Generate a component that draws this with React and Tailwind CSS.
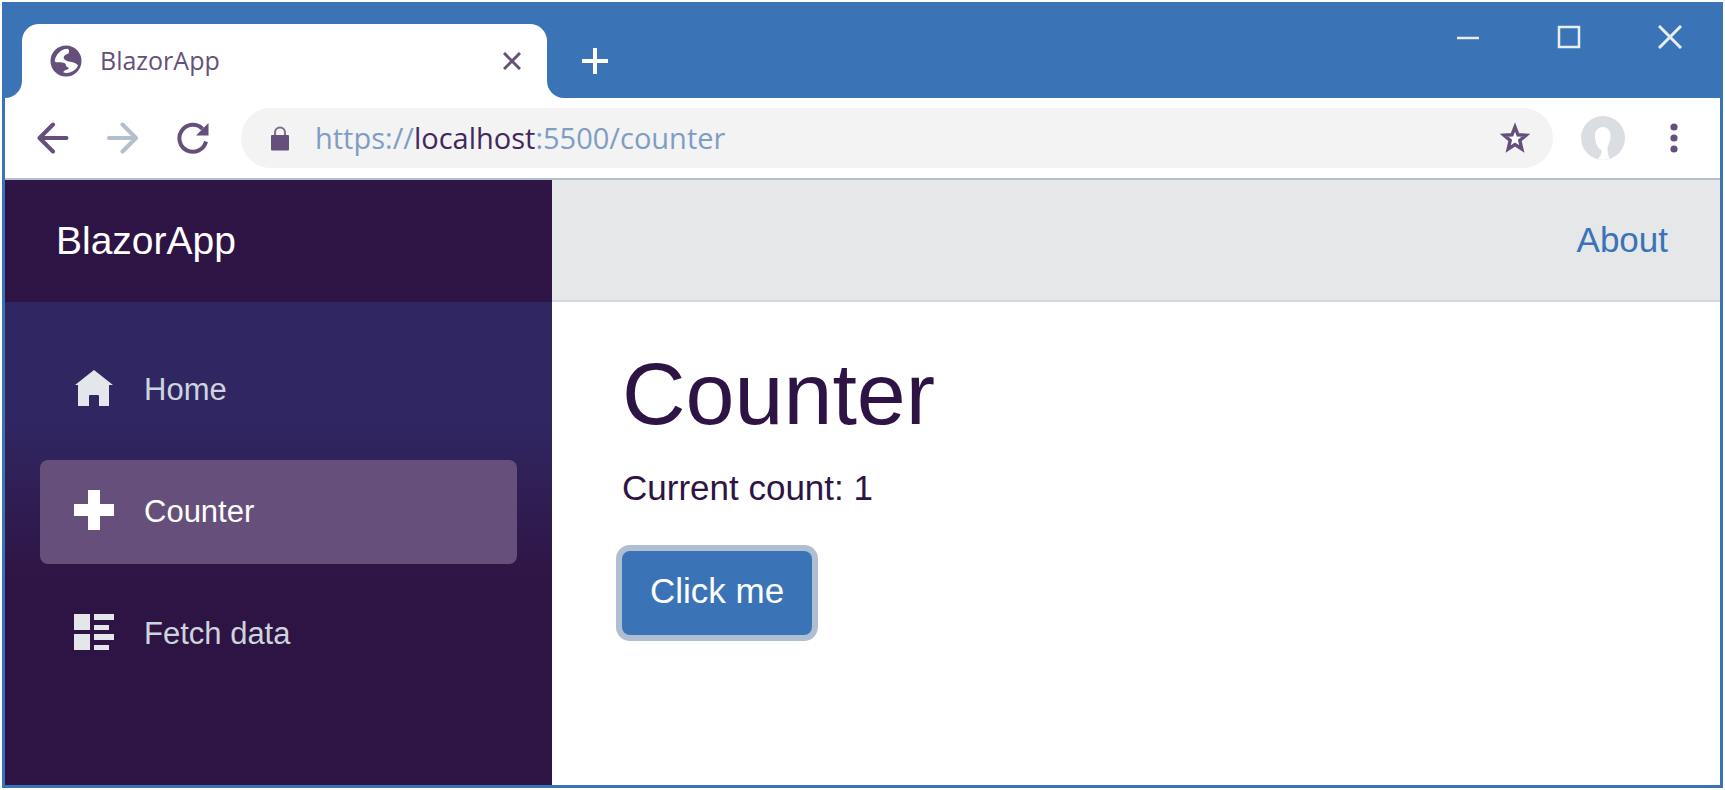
import { useState } from "react";

function GlobeIcon() {
  return (
    <svg viewBox="0 0 32 32" className="size-8 shrink-0" aria-hidden="true">
      <circle cx="16" cy="16" r="15.5" fill="#64507a" />
      <path
        d="M17.500 3.800C11 4 6.500 9 4.800 15C4.500 17.500 6 17.200 8 17.200C12 17.200 15.500 17.500 16 20C16.400 22.500 18 22 18.800 23C18.500 25 13 25 13.500 27.500C18.500 29 25.500 26.500 28 20.500C27 18.500 24 17.600 21.500 17C18.500 16.300 14.500 15.500 13.800 13.200C13.200 11.200 15.500 9.500 18 8.800C19.500 7.500 19.500 4.500 17.500 3.800Z"
        fill="#fff"
      />
    </svg>
  );
}

function BackIcon() {
  return (
    <svg viewBox="0 0 32 32" className="size-8" fill="none" stroke="currentColor" strokeWidth="4" strokeLinecap="round" strokeLinejoin="round" aria-hidden="true">
      <path d="M29.500 16H3M16 2.500L2.500 16L16 29.500" />
    </svg>
  );
}

function ForwardIcon() {
  return (
    <svg viewBox="0 0 32 32" className="size-8" fill="none" stroke="currentColor" strokeWidth="4" strokeLinecap="round" strokeLinejoin="round" aria-hidden="true">
      <path d="M2 16H28.500M15.500 2.500L29 16L15.500 29.500" />
    </svg>
  );
}

function ReloadIcon() {
  return (
    <svg viewBox="0 0 32 32" className="size-8" aria-hidden="true">
      <path d="M29 19.500A13.500 13.500 0 1 1 25.500 6.800" fill="none" stroke="currentColor" strokeWidth="4" />
      <path d="M31.500 1V13.500H19Z" fill="currentColor" />
    </svg>
  );
}

function LockIcon() {
  return (
    <svg viewBox="0 0 18 25" className="h-[25px] w-[18px] shrink-0" aria-hidden="true">
      <path d="M4 11V6.500a5 5 0 0 1 10 0V11" fill="none" stroke="#7a6c92" strokeWidth="2" />
      <rect y="9" width="18" height="15.500" rx="1" fill="#64507a" />
    </svg>
  );
}

function StarIcon() {
  return (
    <svg viewBox="0 0 32 32" className="size-8" aria-hidden="true">
      <path
        d="M16 5L19 12.800L27 13.300L20.800 18.500L22.800 27L16 22.500L9.200 27L11.200 18.500L5 13.300L13 12.800Z"
        fill="#fff"
        stroke="#64507a"
        strokeWidth="3.400"
      />
    </svg>
  );
}

function ProfileIcon() {
  return (
    <svg viewBox="0 0 44 44" className="size-11" aria-hidden="true">
      <circle cx="22" cy="22" r="22" fill="#dadee3" />
      <path d="M22 11C26.500 11 29.500 14.500 29.500 20C29.500 25 28 28 26.500 31C26 35 27 38 28.500 43L22 44L17 43C19.500 40 21 37 20.500 34C16.500 32.500 14 26 14 20C14 14.500 17 11 22 11Z" fill="#fff" />
    </svg>
  );
}

function HomeIcon() {
  return (
    <svg viewBox="0 0 40 36" className="h-9 w-10" fill="#e3e6ea" aria-hidden="true">
      <path d="M20 0L39 15H35V36H25V26Q25 25 24 25H16Q15 25 15 26V36H4V15H1Z" />
    </svg>
  );
}

function PlusIcon() {
  return (
    <svg viewBox="0 0 40 40" className="size-10" fill="#fff" aria-hidden="true">
      <path d="M14 0H26V14H40V26H26V40H14V26H0V14H14Z" />
    </svg>
  );
}

function ListIcon() {
  return (
    <svg viewBox="0 0 40 36" className="h-9 w-10" fill="#e3e6ea" aria-hidden="true">
      <path d="M0 0H16V16H0ZM0 20H16V36H0ZM20 0H40V6H20ZM20 11H35V16H20ZM20 20H40V26H20ZM20 31H35V36H20Z" />
    </svg>
  );
}

const links = [
  { name: "Home", Icon: HomeIcon },
  { name: "Counter", Icon: PlusIcon, active: true },
  { name: "Fetch data", Icon: ListIcon },
];

function TitleBar() {
  return (
    <div className="flex h-[93px] shrink-0 bg-[#3a74b7] text-white">
      <div className="size-[17px] self-end bg-white">
        <div className="size-full rounded-br-full bg-[#3a74b7]" />
      </div>
      <div className="mt-[19px] flex w-[525px] items-center rounded-t-[17px] bg-white pr-[26px] pl-7 text-[#64507a]">
        <GlobeIcon />
        <span className="ml-[18px] flex-1 font-['Open_Sans','Noto_Sans',sans-serif] text-[25px]">BlazorApp</span>
        <button type="button" aria-label="Close tab">
          <svg viewBox="0 0 18 18" className="size-[18px]" stroke="currentColor" strokeWidth="3">
            <path d="M1 1L17 17M17 1L1 17" />
          </svg>
        </button>
      </div>
      <div className="size-[17px] self-end bg-white">
        <div className="size-full rounded-bl-full bg-[#3a74b7]" />
      </div>
      <button type="button" aria-label="New tab" className="mt-[19px] ml-[18px]">
        <svg viewBox="0 0 26 26" className="size-[26px]" stroke="currentColor" strokeWidth="4">
          <path d="M13 0V26M0 13H26" />
        </svg>
      </button>
      <div className="mt-5 mr-[38px] ml-auto flex gap-[77px] self-start">
        <button type="button" aria-label="Minimize">
          <svg viewBox="0 0 24 24" className="size-6" stroke="#e8edf4" strokeWidth="2.500">
            <path d="M1 13H23" />
          </svg>
        </button>
        <button type="button" aria-label="Maximize">
          <svg viewBox="0 0 24 24" className="size-6" fill="none" stroke="#e8edf4" strokeWidth="2.500">
            <path d="M2 2H22V22H2Z" />
          </svg>
        </button>
        <button type="button" aria-label="Close window">
          <svg viewBox="0 0 24 24" className="size-6" stroke="#e8edf4" strokeWidth="3">
            <path d="M1 1L23 23M23 1L1 23" />
          </svg>
        </button>
      </div>
    </div>
  );
}

function Toolbar() {
  return (
    <div className="flex h-[82px] shrink-0 items-center border-b-2 border-[#b3bfcd] pr-[42px] pl-8 text-[#64507a]">
      <div className="flex gap-[38px]">
        <button type="button" aria-label="Back"><BackIcon /></button>
        <button type="button" aria-label="Forward" className="text-[#b3bfcd]"><ForwardIcon /></button>
        <button type="button" aria-label="Reload"><ReloadIcon /></button>
      </div>
      <div className="ml-8 flex h-[60px] flex-1 items-center rounded-full bg-[#f3f3f4] pr-[22px] pl-[30px]">
        <LockIcon />
        <div
          role="textbox"
          aria-label="Address"
          contentEditable
          suppressContentEditableWarning
          className="ml-[26px] flex-1 font-['Open_Sans','Noto_Sans',sans-serif] text-[29px] text-[#7f9dc4] outline-none"
        >
          https://<span className="text-[#42285c]">localhost</span>:5500/counter
        </div>
        <button type="button" aria-label="Bookmark this page"><StarIcon /></button>
      </div>
      <button type="button" aria-label="Profile" className="ml-7"><ProfileIcon /></button>
      <button type="button" aria-label="Browser menu" className="ml-[45px]">
        <svg viewBox="0 0 8 30" className="h-[30px] w-2" fill="currentColor">
          <circle cx="4" cy="4" r="3.600" />
          <circle cx="4" cy="15" r="3.600" />
          <circle cx="4" cy="26" r="3.600" />
        </svg>
      </button>
    </div>
  );
}

function Sidebar() {
  return (
    <aside className="flex w-[547px] shrink-0 flex-col bg-[#2e1444]">
      <a href="#home" className="flex h-[122px] items-center pl-[51px] text-[39px] text-white">BlazorApp</a>
      <nav className="flex flex-1 flex-col gap-[18px] bg-linear-to-b from-[#302662] from-25% to-[#2e1444] to-58% px-[35px] pt-9">
        {links.map(({ name, Icon, active }) => (
          <a
            key={name}
            href={"#" + name.toLowerCase().replace(" ", "-")}
            aria-current={active ? "page" : undefined}
            className={
              "flex h-[104px] items-center gap-[30px] rounded-lg px-[34px] text-[31px] " +
              (active ? "bg-[#664f7a] text-white" : "text-[#ccd4dd]")
            }
          >
            <span className="pb-1"><Icon /></span>
            {name}
          </a>
        ))}
      </nav>
    </aside>
  );
}

export default function App() {
  const [count, setCount] = useState(1);
  return (
    <div className="flex min-h-screen bg-white p-[2px] font-['Liberation_Sans',Arial,sans-serif]">
      <div className="flex flex-1 flex-col border-3 border-[#3a74b7]">
        <TitleBar />
        <Toolbar />
        <div className="flex flex-1">
          <Sidebar />
          <div className="flex-1">
            <header className="flex h-[122px] items-center justify-end border-b-2 border-[#d3d7dc] bg-[#e5e7e9] pr-[52px]">
              <a href="#about" className="text-[35px] text-[#3a74b7]">About</a>
            </header>
            <main className="px-[70px] pt-11 text-[#2e1444]">
              <h1 className="text-[88px] leading-24">Counter</h1>
              <p className="mt-[26px] text-[35px] leading-10">Current count: {count}</p>
              <button
                type="button"
                onClick={() => setCount(count + 1)}
                className="mt-[43px] h-[84px] rounded-lg bg-[#3a74b7] px-7 pb-1 text-[35px] text-white ring-6 ring-[#afbed1]"
              >
                Click me
              </button>
            </main>
          </div>
        </div>
      </div>
    </div>
  );
}
